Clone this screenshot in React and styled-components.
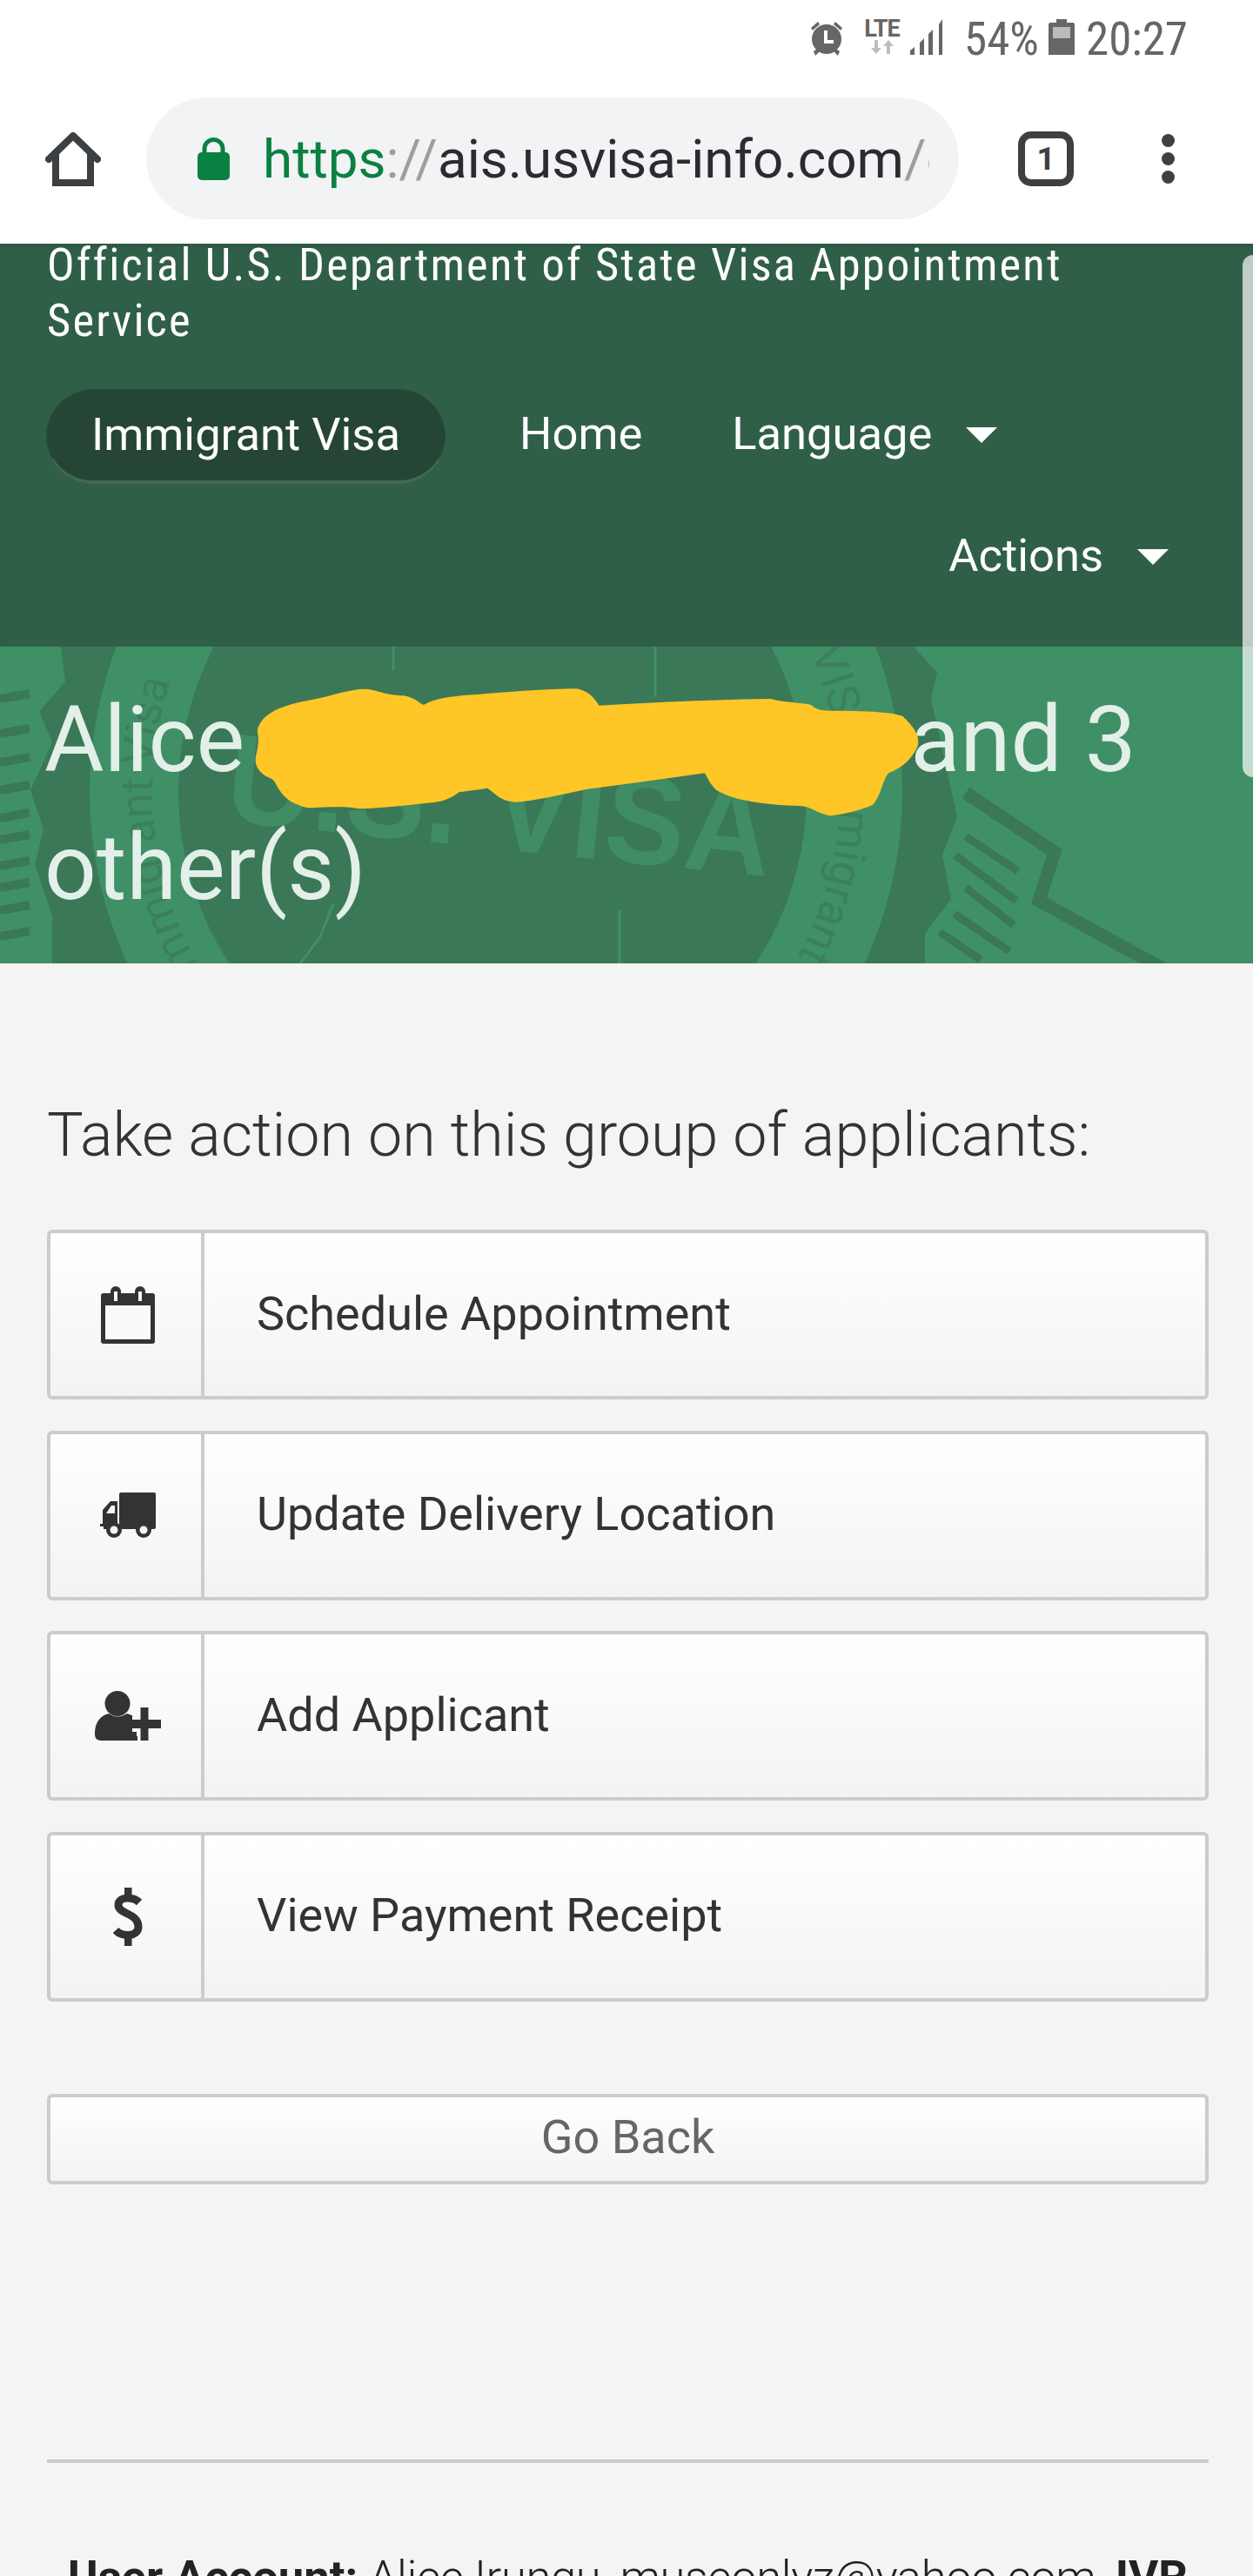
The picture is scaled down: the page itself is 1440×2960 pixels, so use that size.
import React from "react";
import styled, { createGlobalStyle } from "styled-components";

const Global = createGlobalStyle`
  html, body { margin: 0; padding: 0; background: #f4f4f4; }
  * { box-sizing: border-box; }
`;

const Page = styled.div`
  position: relative;
  width: 1440px;
  height: 2960px;
  overflow: hidden;
  background: #f4f4f4;
  font-family: Roboto, "Liberation Sans", sans-serif;
  color: #333;
`;

/* Browser chrome */
const Chrome = styled.div`
  height: 280px;
  background: #fff;
`;
const StatusBar = styled.div`
  height: 112px;
  padding: 22px 76px 0 0;
  display: flex;
  justify-content: flex-end;
  align-items: flex-start;
  color: #666;
`;
const StatusIcon = styled.svg`
  display: block;
  flex: none;
  margin-left: ${(p) => p.$ml || 0}px;
`;
const LteBlock = styled.div`
  width: 45px;
  margin-left: 20px;
  display: flex;
  flex-direction: column;
  align-items: center;
`;
const LteText = styled.span`
  font-size: 27px;
  line-height: 22px;
  height: 24px;
  font-weight: 700;
  letter-spacing: -1px;
  color: #666;
`;
const StatusText = styled.span`
  font-size: 53px;
  font-weight: 400;
  line-height: 46px;
  display: inline-block;
  font-stretch: 75%;
  margin-left: ${(p) => p.$ml || 0}px;
  width: ${(p) => p.$w}px;
  white-space: nowrap;
`;
const Toolbar = styled.div`
  height: 140px;
  padding-left: 52px;
  display: flex;
  align-items: center;
`;
const HomeIcon = styled.svg`
  display: block;
  flex: none;
`;
const Address = styled.div`
  margin-left: 52px;
  width: 934px;
  height: 140px;
  border-radius: 70px;
  background: #f1f3f4;
  display: flex;
  align-items: center;
  padding-left: 59px;
  flex: none;
`;
const LockIcon = styled.svg`
  display: block;
  flex: none;
`;
const Url = styled.div`
  margin-left: 38px;
  width: 766px;
  overflow: hidden;
  white-space: nowrap;
  font-size: 62px;
  line-height: 80px;
  padding-top: 2px;
  color: #2b2c2f;
`;
const UrlGreen = styled.span`
  color: #0b8043;
`;
const UrlGray = styled.span`
  color: #9e9e9e;
`;
const TabCount = styled.div`
  margin-left: 68px;
  width: 64px;
  height: 63px;
  flex: none;
  border: 8px solid #3c4043;
  border-radius: 15px;
  display: flex;
  align-items: center;
  justify-content: center;
  font-size: 37px;
  font-weight: 700;
  color: #3c4043;
`;
const Dots = styled.div`
  margin-left: 101px;
  display: flex;
  flex-direction: column;
  gap: 6px;
  flex: none;
`;
const Dot = styled.span`
  display: block;
  width: 15px;
  height: 15px;
  border-radius: 50%;
  background: #3c4043;
`;

/* Site header */
const Header = styled.header`
  height: 463px;
  overflow: hidden;
  background: #305f48;
  color: #fff;
  padding: 0 0 0 54px;
  box-shadow: inset 0 8px 8px -6px rgba(0, 0, 0, 0.12);
`;
const Title = styled.div`
  margin-top: -8px;
  width: 1240px;
  font-size: 52.5px;
  line-height: 64px;
  font-stretch: 75%;
  letter-spacing: 2.16px;
`;
const NavRow = styled.nav`
  display: flex;
  align-items: center;
  height: 109px;
  margin-top: ${(p) => p.$mt}px;
  justify-content: ${(p) => (p.$end ? "flex-end" : "flex-start")};
  padding-right: ${(p) => (p.$end ? 97 : 0)}px;
`;
const Pill = styled.a`
  margin-left: -1px;
  width: 459px;
  height: 109px;
  border-radius: 55px;
  background: #264635;
  border: 1px solid #2a4d3b;
  border-bottom: 4px solid #42694f;
  display: flex;
  align-items: center;
  justify-content: center;
  font-size: 52.5px;
  padding-bottom: 2px;
`;
const NavLink = styled.a`
  display: flex;
  align-items: center;
  font-size: 52.5px;
  margin-left: ${(p) => p.$ml || 0}px;
  padding-bottom: ${(p) => p.$pb || 0}px;
`;
const Caret = styled.span`
  display: block;
  width: 0;
  height: 0;
  margin-left: ${(p) => p.$ml || 39}px;
  margin-top: 4px;
  border-left: 18px solid transparent;
  border-right: 18px solid transparent;
  border-top: 18px solid #fff;
`;

/* Hero */
const Hero = styled.section`
  position: relative;
  height: 364px;
  overflow: hidden;
  background: #409067;
`;
const Seal = styled.svg`
  position: absolute;
  left: 0;
  top: 0;
`;
const HeroTitle = styled.h1`
  position: relative;
  margin: 0;
  padding: 35px 0 0 51px;
  width: 1386px;
  font-size: 105px;
  line-height: 146.5px;
  font-weight: 400;
  color: #e3efe9;
`;
const Hidden = styled.span`
  display: inline-block;
  width: 713px;
  height: 10px;
`;
const Scribble = styled.svg`
  position: absolute;
  left: 0;
  top: -13px;
`;

/* Content */
const Main = styled.main`
  padding: 155px 51px 0 54px;
`;
const Lead = styled.h2`
  margin: 0;
  font-size: 70px;
  line-height: 84px;
  font-weight: 300;
  color: #333;
  white-space: nowrap;
`;
const Actions = styled.div`
  margin-top: 67px;
  display: flex;
  flex-direction: column;
  gap: 35.6px;
`;
const ActionRow = styled.a`
  display: flex;
  height: 195px;
  border: 4px solid #ccc;
  border-radius: 6px;
  background: linear-gradient(#fff, #f3f3f3);
`;
const IconCell = styled.span`
  width: 177px;
  flex: none;
  border-right: 4px solid #ccc;
  padding-left: 5px;
  display: flex;
  align-items: center;
  justify-content: center;
`;
const ActionLabel = styled.span`
  padding-left: 60px;
  padding-bottom: 3px;
  display: flex;
  align-items: center;
  font-size: 54px;
  color: #333;
`;
const BackButton = styled.a`
  margin-top: 106px;
  height: 104px;
  border: 4px solid #ccc;
  border-radius: 6px;
  background: linear-gradient(#fff, #f3f3f3);
  display: flex;
  align-items: center;
  justify-content: center;
  padding-bottom: 4px;
  font-size: 54px;
  color: #666;
`;
const Rule = styled.hr`
  margin: 316px 0 0;
  border: 0;
  height: 4px;
  background: #ccc;
`;
const Footer = styled.p`
  margin: 96px 0 0;
  text-align: center;
  font-size: 52.5px;
  font-weight: 300;
  line-height: 70px;
  letter-spacing: -0.35px;
  color: #222;
  white-space: nowrap;
`;
const Bold = styled.strong`
  font-weight: 700;
  letter-spacing: 0;
`;
const Scrollbar = styled.div`
  position: absolute;
  right: 0;
  top: 293px;
  width: 12px;
  height: 600px;
  background: rgba(255, 255, 255, 0.69);
  border-radius: 12px 0 0 12px;
`;

const blob =
  "M322 330 C325 280 345 245 385 225 C415 210 435 185 458 185 C475 190 480 205 505 208 C520 215 525 235 530 240 C545 215 570 208 600 203 C640 195 680 185 722 184 C740 195 745 225 750 242 C810 232 890 222 965 219 C980 232 1005 232 1015 240 C1022 255 1025 260 1040 260 C1075 260 1115 262 1130 280 C1145 320 1152 350 1148 385 C1140 430 1130 455 1112 475 C1102 510 1105 540 1092 585 C1075 605 1050 620 1038 622 C1020 610 1015 590 1000 588 C960 585 915 570 895 530 C888 510 885 490 882 475 C830 495 780 515 735 530 C700 550 670 570 645 575 C625 570 620 545 610 527 C595 533 585 537 575 540 C565 560 558 570 545 575 C510 585 480 595 450 598 C435 590 420 590 385 595 C370 585 358 570 350 535 C345 515 345 505 340 495 C325 480 318 450 320 420 C322 390 325 370 322 330 Z";

const wingBars = [60, 100, 133, 165, 197, 222, 252, 277, 303, 333];

export default function App() {
  return (
    <Page>
      <Global />
      <Chrome>
        <StatusBar>
          <StatusIcon $ml={0} width="42" height="42" viewBox="0 0 42 42" fill="#666">
            <circle cx="21" cy="23" r="17" />
            <path d="M3 10 L11 3 L13 6 L5 13 Z M39 10 L31 3 L29 6 L37 13 Z M6 37 L10 34 L13 37 L8 42 Z M36 37 L32 34 L29 37 L34 42 Z" />
            <path d="M18 13 H22 V24 H29 V28 H18 Z" fill="#fff" />
          </StatusIcon>
          <LteBlock>
            <LteText>LTE</LteText>
            <svg width="28" height="16" viewBox="0 0 28 16" fill="#bdbdbd">
              <path d="M5 0 H9 V9 H13 L7 16 L1 9 H5 Z" />
              <path d="M19 16 H23 V7 H27 L21 0 L15 7 H19 Z" />
            </svg>
          </LteBlock>
          <StatusIcon $ml={10} width="44" height="41" viewBox="0 0 44 41" fill="#666">
            <path d="M0 41 V36 L5 32 V41 Z M11 41 V27 L16 22 V41 Z M21 41 V17 L26 12 V41 Z M33 41 V6 L37 0 V41 Z" />
          </StatusIcon>
          <StatusText $ml={18} $w={84}>54%</StatusText>
          <StatusIcon $ml={13} width="30" height="41" viewBox="0 0 30 41">
            <path d="M9 0 H21 V4 H28 A2 2 0 0 1 30 6 V41 H0 V6 A2 2 0 0 1 2 4 H9 Z" fill="#666" />
            <rect x="5" y="9" width="20" height="13" fill="#bbb" />
          </StatusIcon>
          <StatusText $ml={13} $w={116}>20:27</StatusText>
        </StatusBar>
        <Toolbar>
          <HomeIcon width="64" height="63" viewBox="0 0 64 63" fill="none" stroke="#3c4043" strokeWidth="8">
            <path d="M4 32 L32 5 L60 32" strokeLinecap="round" strokeLinejoin="round" />
            <path d="M12 26 V59 H52 V26" />
          </HomeIcon>
          <Address>
            <LockIcon width="37" height="49" viewBox="0 0 37 49" fill="#0b8043">
              <rect x="0" y="17" width="37" height="32" rx="5" />
              <path d="M8 20 V13 A10.5 10.5 0 0 1 29 13 V20" fill="none" stroke="#0b8043" strokeWidth="5" />
            </LockIcon>
            <Url>
              <UrlGreen>https</UrlGreen>
              <UrlGray>://</UrlGray>
              ais.usvisa-info.com
              <UrlGray>/</UrlGray>
              <UrlGray>en-ke/iv/groups</UrlGray>
            </Url>
          </Address>
          <TabCount>1</TabCount>
          <Dots>
            <Dot />
            <Dot />
            <Dot />
          </Dots>
        </Toolbar>
      </Chrome>

      <Header>
        <Title>Official U.S. Department of State Visa Appointment Service</Title>
        <NavRow $mt={47}>
          <Pill>Immigrant Visa</Pill>
          <NavLink $ml={85} $pb={7}>Home</NavLink>
          <NavLink $ml={103} $pb={7}>
            Language
            <Caret />
          </NavLink>
        </NavRow>
        <NavRow $mt={27} $end>
          <NavLink>
            Actions
            <Caret />
          </NavLink>
        </NavRow>
      </Header>

      <Hero>
        <Seal width="1440" height="364" viewBox="0 0 1440 364">
          <defs>
            <path id="ringPath" d="M570 562 A395 395 0 1 1 570 -228 A395 395 0 1 1 570 562" />
          </defs>
          <path
            d="M70 0 L75 40 L45 75 L60 110 L35 165 L50 210 L40 250 L60 310 L60 364 L1063 364 L1063 330 L1093 290 L1083 240 L1100 195 L1070 60 L1077 30 L1050 0 Z"
            fill="#3a7858"
          />
          <circle cx="570" cy="167" r="467" fill="#409067" />
          <circle cx="566" cy="167" r="361" fill="#3a7858" />
          <text fontFamily="Roboto, sans-serif" fontSize="52" fill="#3c7f5d">
            <textPath href="#ringPath" startOffset="750" textAnchor="end">Nonimmigrant Visa</textPath>
          </text>
          <text fontFamily="Roboto, sans-serif" fontSize="52" fill="#3c7f5d">
            <textPath href="#ringPath" startOffset="1695">VISA Immigrant</textPath>
          </text>
          <text
            x="257"
            y="200"
            transform="rotate(5.9 257 200)"
            fontFamily="'Liberation Sans', sans-serif"
            fontWeight="700"
            fontSize="146"
            textLength="628"
            lengthAdjust="spacingAndGlyphs"
            fill="#408c65"
          >
            U.S. VISA
          </text>
          <g fill="none" stroke="#3a7858">
            {wingBars.map((y) => (
              <path key={y} d={`M0 ${y} L34 ${y - 6}`} strokeWidth="10" />
            ))}
            <path d="M1110 168 L1212 236 L1194 292 L1340 372" strokeWidth="15" />
            <path d="M1110 218 L1170 258 M1098 240 L1168 292 M1110 277 L1165 320 M1097 307 L1160 350 M1080 328 L1127 360" strokeWidth="9" />
          </g>
          <g fill="none" stroke="#409067" strokeWidth="3">
            <path d="M452 0 V27 M753 0 V58" />
            <path d="M712 302 V364 M383 296 L367 335 L345 364" />
          </g>
        </Seal>
        <HeroTitle>
          Alice <Hidden /> and 3 other(s)
        </HeroTitle>
        <Scribble width="1440" height="420" viewBox="0 0 1568 1260" preserveAspectRatio="none">
          <path d={blob} fill="#fec627" />
        </Scribble>
      </Hero>

      <Main>
        <Lead>Take action on this group of applicants:</Lead>
        <Actions>
          <ActionRow>
            <IconCell>
              <svg width="62" height="66" viewBox="0 0 62 66">
                <rect x="0" y="8" width="62" height="58" rx="3" fill="#333" />
                <rect x="5" y="22" width="52" height="39" fill="#f9f9f9" />
                <rect x="11" y="0" width="12" height="19" rx="6" fill="#333" />
                <rect x="39" y="0" width="12" height="19" rx="6" fill="#333" />
                <rect x="15" y="6" width="4" height="11" fill="#fbfbfb" />
                <rect x="43" y="6" width="4" height="11" fill="#fbfbfb" />
              </svg>
            </IconCell>
            <ActionLabel>Schedule Appointment</ActionLabel>
          </ActionRow>
          <ActionRow>
            <IconCell>
              <svg width="64" height="52" viewBox="0 0 64 52">
                <path d="M24 0 H62 A2 2 0 0 1 64 2 V40 A2 2 0 0 1 62 42 H22 V2 A2 2 0 0 1 24 0 Z" fill="#333" />
                <path d="M12 10 H20 V42 H4 V39 H0 V36 H3 V20 Z" fill="#333" />
                <path d="M13 15 H17 V24 H7 Z" fill="#f8f8f8" />
                <circle cx="16" cy="43" r="9" fill="#333" />
                <circle cx="50" cy="43" r="9" fill="#333" />
                <circle cx="16" cy="43" r="4.5" fill="#f6f6f6" />
                <circle cx="50" cy="43" r="4.5" fill="#f6f6f6" />
              </svg>
            </IconCell>
            <ActionLabel>Update Delivery Location</ActionLabel>
          </ActionRow>
          <ActionRow>
            <IconCell>
              <svg width="76" height="58" viewBox="0 0 76 58">
                <circle cx="26" cy="14.5" r="14.5" fill="#333" />
                <path d="M0 50 C0 34 8 28 16 26 Q26 33 37 26 C43 28 48 30 49 35 V57 H7 Q0 57 0 50 Z" fill="#333" />
                <path d="M43 38 H57 V52" fill="none" stroke="#f8f8f8" strokeWidth="18" strokeLinejoin="round" />
                <path d="M38 33 H52.5 V19 H61.5 V33 H76 V43 H61.5 V57 H52.5 V43 H38 Z" fill="#333" />
              </svg>
            </IconCell>
            <ActionLabel>Add Applicant</ActionLabel>
          </ActionRow>
          <ActionRow>
            <IconCell>
              <svg width="35" height="67" viewBox="0 0 35 67">
                <path d="M30 17 C24 11 6 9 6 20 C6 31 29 29 29 45 C29 57 10 57 3 49" fill="none" stroke="#333" strokeWidth="9" />
                <rect x="13" y="0" width="8.5" height="11" fill="#333" />
                <rect x="13" y="56" width="8.5" height="11" fill="#333" />
              </svg>
            </IconCell>
            <ActionLabel>View Payment Receipt</ActionLabel>
          </ActionRow>
        </Actions>
        <BackButton>Go Back</BackButton>
        <Rule />
        <Footer>
          <Bold>User Account:</Bold> Alice Irungu, museonlyz@yahoo.com, <Bold>IVR</Bold>
        </Footer>
      </Main>
      <Scrollbar />
    </Page>
  );
}
